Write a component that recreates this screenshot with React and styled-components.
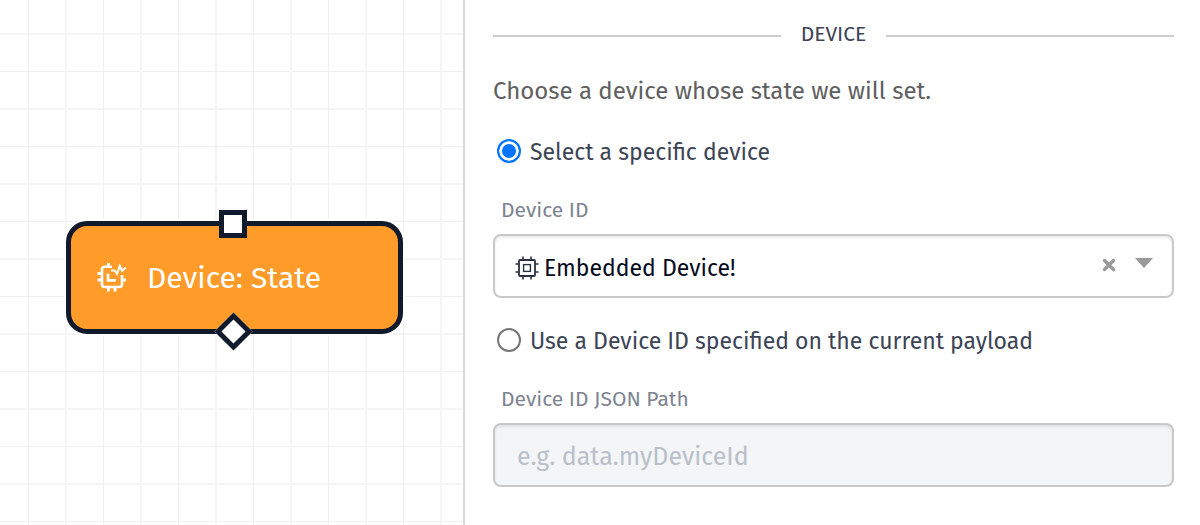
import React, { useState } from "react";
import styled, { createGlobalStyle } from "styled-components";

const App = () => {
    const [mode, setMode] = useState("specific");
    const [device, setDevice] = useState("embedded");
    const [path, setPath] = useState("");

    return (
        <>
            <GlobalStyle />
            <Page>
                <Canvas>
                    <Node>
                        <Port />
                        <StateIcon />
                        <NodeName>Device: State</NodeName>
                        <OutPort />
                    </Node>
                </Canvas>
                <Panel>
                    <SectionTitle>DEVICE</SectionTitle>
                    <Description>Choose a device whose state we will set.</Description>
                    <Option>
                        <Radio name="mode" checked={mode === "specific"} onChange={() => setMode("specific")} />
                        Select a specific device
                    </Option>
                    <Label htmlFor="device-id">Device ID</Label>
                    <SelectBox>
                        <ChipIcon />
                        <Select id="device-id" value={device} onChange={(e) => setDevice(e.target.value)}>
                            <option value="embedded">Embedded Device!</option>
                            <option value=""></option>
                        </Select>
                        <ClearButton type="button" aria-label="Clear" onClick={() => setDevice("")}>
                            <svg width="14" height="14" viewBox="0 0 14 14">
                                <path d="M2.5 2.5l9 9M11.5 2.5l-9 9" stroke="currentColor" strokeWidth="3.4" strokeLinecap="round" />
                            </svg>
                        </ClearButton>
                        <Arrow width="18" height="10" viewBox="0 0 18 10">
                            <path d="M0 0h18L9 10z" fill="currentColor" />
                        </Arrow>
                    </SelectBox>
                    <Option>
                        <Radio name="mode" checked={mode === "payload"} onChange={() => setMode("payload")} />
                        Use a Device ID specified on the current payload
                    </Option>
                    <Label htmlFor="device-path">Device ID JSON Path</Label>
                    <TextInput
                        id="device-path"
                        placeholder="e.g. data.myDeviceId"
                        value={path}
                        disabled={mode !== "payload"}
                        onChange={(e) => setPath(e.target.value)}
                    />
                </Panel>
            </Page>
        </>
    );
};

export default App;

const StateIcon = () => (
    <svg width="30" height="30" viewBox="0 0 30 30" fill="none" stroke="#fff" aria-hidden="true">
        <path d="M15 3.800H7.500A2.500 2.500 0 0 0 5 6.300v15.200A2.500 2.500 0 0 0 7.500 24h15a2.500 2.500 0 0 0 2.500-2.500V12" strokeWidth="2.600" />
        <path d="M11.400 0v4M11.400 24v4.500M18 24v4.500M.5 10.500H5M.5 17H5M24 17h5" strokeWidth="2.800" />
        <path d="M11 10.500v6.900h7.800" strokeWidth="2.600" />
        <path d="M14 7.500h3.600l2.400 3.300L22.800 3l2.400 4.800 3.600-3.300" strokeWidth="2.100" />
    </svg>
);

const ChipIcon = () => (
    <Chip width="24" height="24" viewBox="0 0 24 24" fill="none" stroke="#2b3245" aria-hidden="true">
        <rect x="4" y="4" width="16" height="16" rx="1" strokeWidth="1.800" />
        <rect x="8.600" y="8.600" width="6.800" height="6.800" strokeWidth="1.400" />
        <path d="M8 .5v3.500M16 .5v3.500M8 20v3.500M16 20v3.500M.5 8h3.500M.5 16h3.500M20 8h3.500M20 16h3.500" strokeWidth="1.600" />
    </Chip>
);

const GlobalStyle = createGlobalStyle`
    * {
        box-sizing: border-box;
    }
    body {
        margin: 0;
        background: #fff;
        font-family: "Fira Sans", "Noto Sans", sans-serif;
    }
`;

const Page = styled.div`
    display: grid;
    grid-template-columns: 31fr 49fr;
    min-height: 100vh;
`;

const Canvas = styled.main`
    position: relative;
    border-right: 2px solid #dadada;
    background-color: #fff;
    background-image:
        linear-gradient(90deg, transparent 28px, #f0f0f0 28px, #f0f0f0 29px, transparent 29px, transparent 65px, #f5f5f5 65px, #f5f5f5 67px, transparent 67px),
        linear-gradient(transparent 33px, #f5f5f5 33px, #f5f5f5 35px, transparent 35px, transparent 71px, #f0f0f0 71px, #f0f0f0 72px, transparent 72px);
    background-size: 75px 75px;
`;

const Node = styled.div`
    position: absolute;
    top: 221px;
    left: 66px;
    width: 337px;
    height: 113px;
    display: flex;
    align-items: center;
    gap: 20px;
    padding-left: 26px;
    border: 5px solid #101a2c;
    border-radius: 21px;
    background: #ff9b28;
    box-shadow: 0 0 0 2px #fff;
`;

const NodeName = styled.span`
    color: #fff;
    font-size: 30px;
    line-height: 32px;
    white-space: nowrap;
`;

const Port = styled.span`
    position: absolute;
    top: -16px;
    left: 148px;
    width: 28px;
    height: 28px;
    border: 5px solid #101a2c;
    background: #fff;
`;

const OutPort = styled(Port)`
    top: auto;
    bottom: -16px;
    left: 149px;
    width: 27px;
    height: 27px;
    transform: rotate(45deg);
`;

const Panel = styled.form`
    display: flex;
    flex-direction: column;
    padding: 20px 26px 36px 28px;
`;

const SectionTitle = styled.h2`
    display: flex;
    align-items: center;
    gap: 20px;
    margin: 0 0 27px;
    color: #3c4456;
    font-size: 21px;
    font-weight: 400;
    line-height: 28px;

    &::before,
    &::after {
        content: "";
        flex: 1;
        height: 2px;
        margin-top: 4px;
        background: #ccc;
    }
`;

const Description = styled.p`
    margin: 0 0 29px;
    color: #606060;
    font-size: 24px;
    line-height: 32px;
`;

const Option = styled.label`
    display: flex;
    align-items: center;
    gap: 9px;
    padding-left: 4px;
    color: #3c4456;
    font-size: 23px;
    line-height: 32px;
`;

const Radio = styled.input.attrs({ type: "radio" })`
    appearance: none;
    flex: none;
    width: 24px;
    height: 24px;
    margin: 0 0 2px;
    border: 2px solid #767676;
    border-radius: 50%;
    background: #fff;

    &:checked {
        border-color: #0075ff;
        background: #0075ff;
        box-shadow: inset 0 0 0 3px #fff;
    }
`;

const Label = styled.label`
    margin: 28px 0 10px;
    padding-left: 8px;
    color: #7d8491;
    font-size: 21px;
    line-height: 28px;
`;

const SelectBox = styled.div`
    position: relative;
    margin-bottom: 27px;
    color: #999;
`;

const Select = styled.select`
    appearance: none;
    display: block;
    width: 100%;
    height: 64px;
    padding: 4px 90px 0 49px;
    border: 2px solid #c8c8c8;
    border-radius: 8px;
    background: #fff;
    box-shadow: inset 0 2px 3px rgba(0, 0, 0, 0.08);
    color: #050b1c;
    font-family: inherit;
    font-size: 23px;
`;

const Chip = styled.svg`
    position: absolute;
    top: 22px;
    left: 22px;
    pointer-events: none;
`;

const ClearButton = styled.button`
    position: absolute;
    top: 20px;
    right: 54px;
    display: flex;
    align-items: center;
    justify-content: center;
    width: 22px;
    height: 22px;
    padding: 0;
    border: 0;
    background: none;
    color: #999;
`;

const Arrow = styled.svg`
    position: absolute;
    top: 24px;
    right: 21px;
    pointer-events: none;
`;

const TextInput = styled.input`
    width: 100%;
    height: 64px;
    padding: 4px 22px 0;
    border: 2px solid #c8c8c8;
    border-radius: 8px;
    background: #fff;
    box-shadow: inset 0 2px 3px rgba(0, 0, 0, 0.08);
    color: #050b1c;
    font-family: inherit;
    font-size: 25px;

    &:disabled {
        background: #f4f5f7;
    }

    &::placeholder {
        color: #b9c0c9;
        opacity: 1;
    }
`;
